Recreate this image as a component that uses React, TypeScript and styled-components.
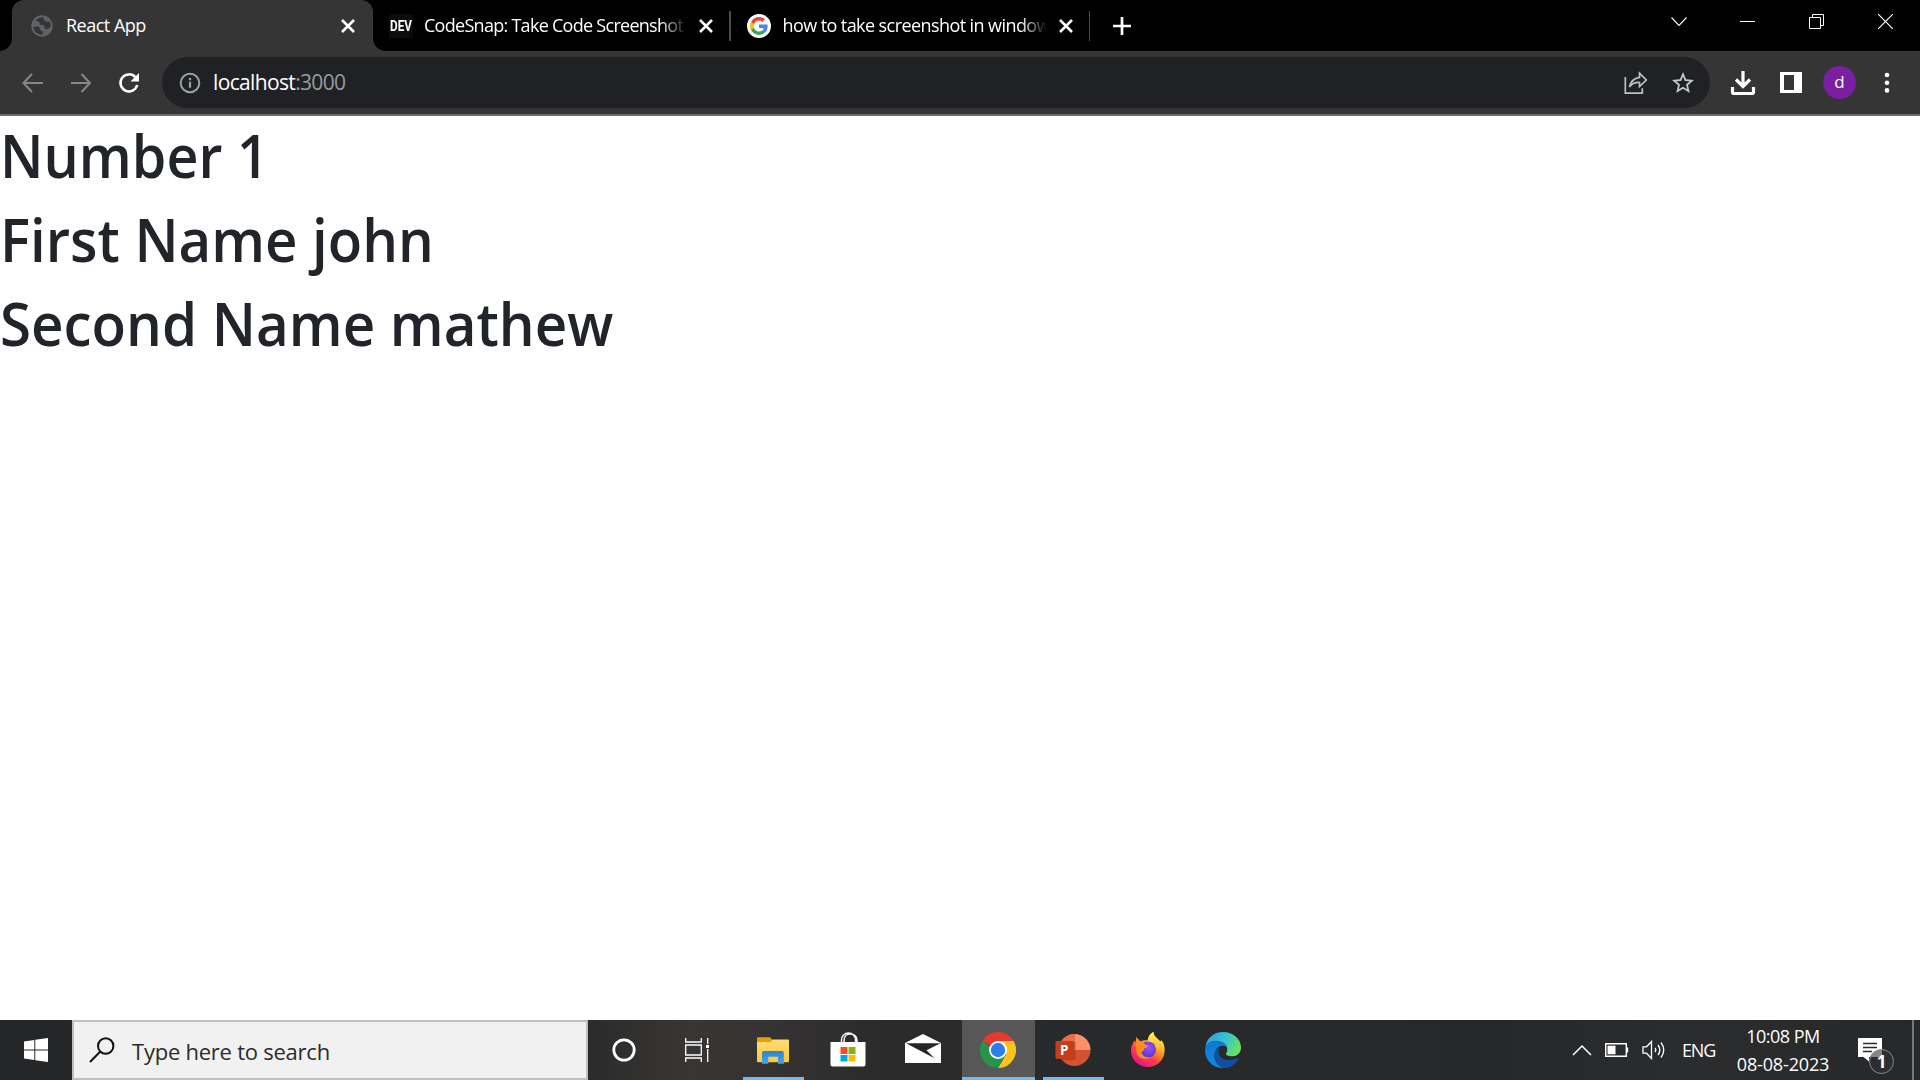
import React from "react";
import styled, { createGlobalStyle } from "styled-components";

const Global = createGlobalStyle`
  * { box-sizing: border-box; }
  body { margin: 0; overflow: hidden; background: #fff; font-family: "Open Sans", "Noto Sans", sans-serif; }
  svg { display: block; flex: none; }
`;

const Screen = styled.div`
  width: 1920px;
  height: 1080px;
  display: flex;
  flex-direction: column;
  background: #fff;
`;

const TabStrip = styled.header`
  height: 51px;
  display: flex;
  background: #000;
  padding-left: 12px;
`;

const Tab = styled.div<{ $active?: boolean; $width: number }>`
  position: relative;
  width: ${(p) => p.$width}px;
  height: 51px;
  flex: none;
  display: flex;
  align-items: center;
  padding: 0 ${(p) => (p.$active ? 17 : 15)}px 0 ${(p) => (p.$active ? 19 : 16)}px;
  background: ${(p) => (p.$active ? "#353535" : "transparent")};
  border-radius: 12px 12px 0 0;
  &::before,
  &::after {
    content: "";
    display: ${(p) => (p.$active ? "block" : "none")};
    position: absolute;
    bottom: 0;
    width: 12px;
    height: 12px;
  }
  &::before { left: -12px; background: radial-gradient(circle at 0 0, #000 11.5px, #353535 12px); }
  &::after { right: -12px; background: radial-gradient(circle at 100% 0, #000 11.5px, #353535 12px); }
`;

const TabTitle = styled.span<{ $fade?: boolean; $gap: number; $spacing: number }>`
  flex: 1;
  min-width: 0;
  margin: 0 ${(p) => (p.$fade ? 8 : 12)}px 2px ${(p) => p.$gap}px;
  height: 26px;
  line-height: 26px;
  overflow: hidden;
  white-space: nowrap;
  color: #fff;
  font-size: 18px;
  letter-spacing: ${(p) => p.$spacing}px;
  mask-image: ${(p) => (p.$fade ? "linear-gradient(90deg, #000 calc(100% - 30px), transparent calc(100% - 3px))" : "none")};
`;

const Divider = styled.div`
  width: 1.5px;
  height: 30px;
  margin-top: 11px;
  background: #4c4c4c;
  flex: none;
`;

const DevBadge = styled.div`
  width: 24px;
  height: 24px;
  flex: none;
  background: #0b0c0e;
  display: flex;
  align-items: center;
  justify-content: center;
  color: #fff;
  font: 700 14px/24px "Roboto", sans-serif;
  span { transform: scaleX(0.84); }
`;

const NewTab = styled.div`
  padding: 17px 0 0 23px;
`;

const WindowControls = styled.div`
  margin-left: auto;
  display: flex;
  height: 43px;
  align-items: center;
`;

const WindowButton = styled.div`
  width: 69px;
  display: flex;
  justify-content: center;
`;

const Toolbar = styled.div`
  height: 65px;
  display: flex;
  align-items: center;
  background: #353535;
  border-bottom: 2px solid #696969;
  padding-left: 21px;
`;

const NavButton = styled.div<{ $shift?: number }>`
  width: 48px;
  flex: none;
  padding-left: ${(p) => p.$shift ?? 0}px;
`;

const AddressBar = styled.div`
  width: 1548px;
  height: 51px;
  margin-left: -3px;
  border-radius: 26px;
  background: #202124;
  display: flex;
  align-items: center;
  padding: 0 15px 0 17px;
`;

const Url = styled.span`
  flex: 1;
  margin-left: 12px;
  color: #fff;
  font-size: 21px;
  line-height: 30px;
  letter-spacing: -0.65px;
  padding-bottom: 1px;
  span { color: #999b9e; }
`;

const AddressActions = styled.div`
  display: flex;
  gap: 23px;
`;

const ToolbarActions = styled.div`
  display: flex;
  align-items: center;
  margin-left: 20px;
`;

const Avatar = styled.div`
  width: 33px;
  height: 33px;
  border-radius: 50%;
  margin: 0 28px 0 21px;
  background: #7b1fa2;
  color: #fff;
  font-size: 17px;
  line-height: 32px;
  text-align: center;
`;

const Page = styled.main`
  flex: 1;
  background: #fff;
  padding-top: 3px;
`;

const Heading = styled.h1<{ $stretch: number }>`
  width: max-content;
  margin: 0 0 12px;
  font-size: 59.5px;
  line-height: 72px;
  font-weight: 560;
  color: #212529;
  white-space: nowrap;
  transform: scaleX(${(p) => p.$stretch});
  transform-origin: 0 0;
`;

const Taskbar = styled.footer`
  height: 60px;
  display: flex;
  background: linear-gradient(90deg, #242628 0, #2b2b2b 590px, #383634 690px, #363433 760px, #2b2b2b 880px, #27292a 1150px, #26282a 1500px, #2a2c2e 1700px, #262829 1920px);
`;

const StartButton = styled.div`
  width: 72px;
  display: flex;
  align-items: center;
  justify-content: center;
`;

const SearchBox = styled.div`
  width: 516px;
  height: 60px;
  border: 2px solid #bfbfbf;
  background: #f1f1f1;
  display: flex;
  align-items: center;
  padding-left: 15px;
`;

const SearchLabel = styled.span`
  margin: 1px 0 0 17px;
  color: #2b2b2b;
  font-size: 22px;
  line-height: 32px;
  letter-spacing: -0.24px;
`;

const TaskSlot = styled.div<{ $width?: number; $on?: boolean; $line?: number }>`
  position: relative;
  width: ${(p) => p.$width ?? 75}px;
  height: 60px;
  display: flex;
  align-items: center;
  justify-content: center;
  padding-right: ${(p) => (p.$width === 72 ? 0 : 2)}px;
  &::before {
    content: "";
    position: absolute;
    z-index: 0;
    inset: 0 1px;
    background: ${(p) => (p.$on ? "#575757" : "none")};
  }
  &::after {
    content: "";
    position: absolute;
    bottom: 0;
    left: calc(50% - ${(p) => (p.$line ?? 0) / 2}px);
    width: ${(p) => p.$line ?? 0}px;
    height: 3px;
    background: #76b9ed;
  }
  svg { position: relative; }
`;

const Tray = styled.div`
  margin-left: auto;
  display: flex;
  align-items: center;
`;

const TrayIcons = styled.div`
  display: flex;
  align-items: center;
  gap: 13px;
`;

const Language = styled.span`
  width: 33px;
  margin: 0 20px 0 16px;
  color: #fff;
  font-size: 18px;
  line-height: 26px;
  letter-spacing: -1.2px;
`;

const Clock = styled.div`
  width: 96px;
  display: flex;
  flex-direction: column;
  align-items: center;
  color: #fff;
  font-size: 18px;
  line-height: 28px;
  white-space: nowrap;
`;

const ClockLine = styled.span<{ $spacing: number }>`
  letter-spacing: ${(p) => p.$spacing}px;
`;

const Notifications = styled.div`
  position: relative;
  width: 38px;
  height: 60px;
  margin-left: 27px;
  padding-top: 18px;
`;

const Count = styled.div`
  position: absolute;
  left: 11px;
  top: 29px;
  width: 25px;
  height: 25px;
  border: 1px solid #8b8b8b;
  border-radius: 50%;
  background: linear-gradient(#868686, #868686) 0 0 / 12px 7px no-repeat #2b2d2e;
  color: #fff;
  text-align: center;
  font-size: 17px;
  font-weight: 700;
  line-height: 23px;
`;

const ShowDesktop = styled.div`
  width: 8px;
  height: 60px;
  margin-left: 16px;
  border-left: 2px solid #777;
`;

const Line = ({ w, h, d, sw = 2, color = "#fff" }: { w: number; h: number; d: string; sw?: number; color?: string }) => (
  <svg width={w} height={h} viewBox={`0 0 ${w} ${h}`} fill="none" stroke={color} strokeWidth={sw}>
    <path d={d} />
  </svg>
);

const CloseIcon = () => <Line w={16} h={16} sw={2.6} d="M2 2 14 14M14 2 2 14" />;

const Globe = () => (
  <svg width="22" height="22" viewBox="0 0 22 22">
    <circle cx="11" cy="11" r="10.700" fill="#5f6368" />
    <path d="M12.500 2.300C9.500 2 6.500 3.400 4.700 5.500 6 6.800 7 6.200 8 7c1.200 1 .2 2.600 1.800 3 1.700.3 2.400-.4 3.200.8.7 1.200-.2 2.700 1.200 3.200 1.800.5 4-.6 5.300-1.800.5-2-.1-4.200-1-5.700-1.600.9-2.600.3-3.800-.5-1.500-1-2.900-1.700-2.200-3.700Z" fill="#353535" />
    <path d="M2.300 11.800c2.200-.5 5-.6 6.200.4 1.100 1 .2 2.200 1 3 .9.900 2.200.5 2.400 1.800.1 1-.5 1.800-.9 2.700C6.500 19.700 2.800 16.300 2.300 11.800Z" fill="#353535" />
  </svg>
);

const GoogleIcon = () => (
  <svg width="24" height="24" viewBox="0 0 24 24">
    <circle cx="12" cy="12" r="12" fill="#fff" />
    <g transform="translate(3 3) scale(.375)">
      <path fill="#ea4335" d="M24 9.500c3.540 0 6.710 1.220 9.210 3.600l6.850-6.850C35.900 2.380 30.470 0 24 0 14.620 0 6.510 5.380 2.560 13.220l7.980 6.190C12.430 13.720 17.740 9.500 24 9.500z" />
      <path fill="#4285f4" d="M46.980 24.550c0-1.570-.15-3.090-.38-4.550H24v9.020h12.940c-.58 2.960-2.260 5.480-4.780 7.180l7.730 6c4.510-4.180 7.090-10.360 7.090-17.650z" />
      <path fill="#fbbc05" d="M10.530 28.590c-.48-1.450-.76-2.990-.76-4.590s.27-3.140.76-4.590l-7.980-6.190C.92 16.460 0 20.120 0 24c0 3.880.92 7.540 2.560 10.780l7.970-6.190z" />
      <path fill="#34a853" d="M24 48c6.480 0 11.930-2.130 15.890-5.810l-7.730-6c-2.150 1.450-4.920 2.300-8.160 2.300-6.260 0-11.570-4.220-13.470-9.910l-7.980 6.190C6.510 42.620 14.620 48 24 48z" />
    </g>
  </svg>
);

const ReloadIcon = () => (
  <svg width="22" height="22" viewBox="0 0 22 22">
    <path d="M17.300 5.200A8.500 8.500 0 1 0 19.200 13" fill="none" stroke="#fff" strokeWidth="2.500" />
    <path d="M21 1v8.500h-8.500z" fill="#fff" />
  </svg>
);

const InfoIcon = () => (
  <svg width="22" height="22" viewBox="0 0 22 22">
    <circle cx="11" cy="11" r="9.300" fill="none" stroke="#9aa0a6" strokeWidth="2" />
    <path d="M11 9.800v6M11 6v2.200" stroke="#9aa0a6" strokeWidth="2.200" />
  </svg>
);

const ShareIcon = () => (
  <svg width="24" height="24" viewBox="0 0 24 24" fill="none" stroke="#bdc0c4" strokeWidth="1.700">
    <path d="M1.300 6v16.200h17v-5" />
    <path d="M15.500 2.200 22.300 9l-6.800 6.500v-4C11 11.200 8 12.500 5.500 16 6.500 10.500 10 7.200 15.500 6.300z" />
  </svg>
);

const StarIcon = () => (
  <svg width="24" height="24" viewBox="0 0 24 24">
    <path transform="translate(-1.200 -1.200) scale(1.1)" fill="#c4c7cb" d="m22 9.240-7.190-.62L12 2 9.190 8.630 2 9.240l5.460 4.730L5.820 21 12 17.270 18.180 21l-1.630-7.030zM12 15.400l-3.760 2.270 1-4.280-3.320-2.880 4.380-.38L12 6.100l1.710 4.040 4.380.38-3.320 2.880 1 4.280z" />
  </svg>
);

const DownloadIcon = () => (
  <svg width="26" height="26" viewBox="0 0 26 26" fill="none" stroke="#fff" strokeWidth="3.200">
    <path d="M13 1v15M6 9.500l7 7 7-7" />
    <path d="M2.500 17v5q0 1.500 1.500 1.500h18q1.500 0 1.500-1.500v-5" />
  </svg>
);

const PanelSvg = styled.svg`
  margin-left: 24px;
`;

const SidePanelIcon = () => (
  <PanelSvg width="22" height="22" viewBox="0 0 22 22">
    <path d="M0 0h22v21H0zM4 3v15h10V3z" fill="#fff" fillRule="evenodd" />
  </PanelSvg>
);

const MenuDots = () => (
  <svg width="6" height="22" viewBox="0 0 6 22" fill="#fff">
    <circle cx="3" cy="3" r="2.300" />
    <circle cx="3" cy="10.700" r="2.300" />
    <circle cx="3" cy="18.400" r="2.300" />
  </svg>
);

const SearchIcon = () => (
  <svg width="26" height="26" viewBox="0 0 26 26" fill="none" stroke="#111" strokeWidth="2">
    <circle cx="16.700" cy="9" r="7.700" />
    <path d="M11.300 14.500 1 25" />
  </svg>
);

const WindowsLogo = () => (
  <svg width="24" height="24" viewBox="0 0 24 24" fill="#fff">
    <path d="M0 3.400 10.300 2v9.400H0zM11.300 1.800 24 0v11.400H11.300zM0 12.400h10.300V22L0 20.600zM11.300 12.400H24V24l-12.700-1.800z" />
  </svg>
);

const CortanaIcon = () => (
  <svg width="24" height="24" viewBox="0 0 24 24">
    <circle cx="12" cy="12" r="10.200" fill="none" stroke="#fff" strokeWidth="2.800" />
  </svg>
);

const TaskViewIcon = () => (
  <svg width="24" height="24" viewBox="0 0 24 24" fill="none" stroke="#fff" strokeWidth="1.300">
    <path d="M.7 0v4h15.600V0M.7 7h15.600v10H.7zM.7 24v-4h15.600v4M22.700 0v6M22.700 11v13" />
    <path d="M21 7h3v3h-3z" fill="#fff" stroke="none" />
  </svg>
);

const FolderIcon = () => (
  <svg width="32" height="27" viewBox="0 0 32 27">
    <defs>
      <linearGradient id="folder" x2="0" y2="1"><stop stopColor="#ffdc76" /><stop offset="1" stopColor="#fbc936" /></linearGradient>
      <linearGradient id="clip" x2="0" y2="1"><stop stopColor="#2d82cf" /><stop offset="1" stopColor="#45a4eb" /></linearGradient>
    </defs>
    <path d="M0 1.200Q0 .2 1 .2h12l2 2v4H0z" fill="#e2a006" />
    <path d="M0 5h13.500l2-2.500H31q1 0 1 1V24q0 1.200-1 1.200H1q-1 0-1-1.200z" fill="url(#folder)" />
    <path d="M5 26.800V16q0-2 2-2h18q1.800 0 1.800 2v10.800H21v-7H11.300v7z" fill="url(#clip)" />
  </svg>
);

const StoreIcon = () => (
  <svg width="36" height="36" viewBox="0 0 36 36">
    <path d="M11.500 10V8a7 7 0 0 1 14 0v2M14 10V8c0-8 13-8 13 0v2" fill="none" stroke="#f5f5f5" strokeWidth="1.500" />
    <path d="M.5 10h35v22.500q0 2-2 2h-31q-2 0-2-2z" fill="#fff" />
    <path d="M10.500 15h7v7h-7z" fill="#f25022" />
    <path d="M18.500 15h7v7h-7z" fill="#7fba00" />
    <path d="M10.500 23h7v6.500h-7z" fill="#00a4ef" />
    <path d="M18.500 23h7v6.500h-7z" fill="#ffb900" />
  </svg>
);

const MailIcon = () => (
  <svg width="36" height="32" viewBox="0 0 36 32" fill="#fff">
    <path d="M0 9 18 0l18 9v20H0z" />
    <path d="M1 9.200h34.500L21.500 16.200l8 8z" fill="#252728" />
  </svg>
);

const ChromeIcon = () => (
  <svg width="36" height="36" viewBox="0 0 36 36">
    <path d="M18 18 2.400 9A18 18 0 0 1 33.600 9z" fill="#e33b2e" />
    <path d="M18 9h15.600A18 18 0 0 1 18 36l8-13.500z" fill="#fcc31e" />
    <path d="M2.400 9A18 18 0 0 0 18 36l7.800-13.500H18z" fill="#269547" />
    <circle cx="18" cy="18" r="9" fill="#fff" />
    <circle cx="18" cy="18" r="7.200" fill="#2f7de9" />
  </svg>
);

const PowerPointIcon = () => (
  <svg width="36" height="32" viewBox="0 0 36 32">
    <path d="M19.500 16V0a16 16 0 1 0 16 16z" fill="#d35230" />
    <path d="M19.500 0v16h-16a16 16 0 0 1 16-16z" fill="#ed6c47" />
    <path d="M19.500 0a16 16 0 0 1 16 16h-16z" fill="#ff8f6b" />
    <path d="M18.500 8h2v18h-16z" fill="#8f2b15" opacity=".45" />
    <rect x=".5" y="7" width="18.500" height="18" rx="1.500" fill="#c43e1c" />
    <text x="5" y="20.500" fill="#fff" fontFamily="Open Sans" fontWeight="700" fontSize="13.500">P</text>
  </svg>
);

const FirefoxIcon = () => (
  <svg width="36" height="36" viewBox="0 0 36 36">
    <defs>
      <linearGradient id="fox" x1=".8" y1=".1" x2=".25" y2=".95">
        <stop stopColor="#fff044" /><stop offset=".35" stopColor="#ff9c22" /><stop offset=".65" stopColor="#ff4147" /><stop offset="1" stopColor="#e31587" />
      </linearGradient>
      <linearGradient id="flame" x2="0" y2="1"><stop stopColor="#fff44f" /><stop offset="1" stopColor="#ffa02e" /></linearGradient>
      <radialGradient id="orb" cx=".55" cy=".4"><stop stopColor="#a14fff" /><stop offset="1" stopColor="#5b3fd4" /></radialGradient>
    </defs>
    <path d="M2.500 12 4.200 8.500l1.500 2L6.300 5l4 4.200C13 8 16 8 17.500 8.500 18.200 4.500 20 1.500 23.500 0c0 4 3 5.500 5.200 8l2 1.500.6-1.500c3 3.500 3.800 8 3.200 12.500C33.300 29.500 26 35 18 35 8.500 35 1 28 1 18.500c0-2.500.6-4.500 1.500-6.500z" fill="url(#fox)" />
    <circle cx="18" cy="17.500" r="8" fill="url(#orb)" />
    <path d="M17.500 9.500C18.200 5 20 1.500 23.500 0c0 4 3 5.500 5.200 8 3 3.700 3.500 10 1 14-1-3-2.200-5-4-6.500 0-1.700-1.500-2.300-.4-3.300-1.300-1.700-5-2.500-7.800-2.700z" fill="url(#flame)" />
    <path d="M6.300 6.500l4 3c2-.3 4 1 5 3.300l3 .7c-.3 2-3 2.300-4 3.200-.7.800-.3 2.300-3 3.300 1 4.500 5 6 9 5-3 3-9 2.500-12-1S5 12 6.300 6.500z" fill="#ff8a1f" />
  </svg>
);

const EdgeIcon = () => (
  <svg width="36" height="36" viewBox="0 0 36 36">
    <defs>
      <linearGradient id="edgeTop" x1="0" y1=".2" x2="1" y2=".6"><stop stopColor="#2f9fe4" /><stop offset=".5" stopColor="#35c1d3" /><stop offset="1" stopColor="#6be35b" /></linearGradient>
      <linearGradient id="edgeSide" x2="0" y2="1"><stop stopColor="#1277cc" /><stop offset="1" stopColor="#0d8be4" /></linearGradient>
    </defs>
    <path d="M.5 15C1.500 6 9 0 18 0c10.500 0 18 7.300 18 15.500 0 5.500-4 8.800-9 8.800-4.500 0-6-1.600-6-2.600 0-.9 1.300-1.500 1.300-4.200C22.300 12 16 9 11 9 5.500 9 2 12 .5 15z" fill="url(#edgeTop)" />
    <path d="M0 18C0 12 5 8.800 11 8.800c5.500 0 11 3 11.300 7.200-1-1.500-2.800-2.200-4.800-2.200-4 0-8 4-8 10C9.500 30 14 35 19.500 36 8.500 37 0 28.500 0 18z" fill="url(#edgeSide)" />
    <path d="M15 15.500c-3 3.500-1.500 12.500 9 12.500 3.500 0 6-1 8-1.900 1-.5 1.800.4 1.200 1.300C30 32.500 25.500 36 19.500 36c-6-1-10-6-10-12 0-4 2.500-7.300 5.500-8.500z" fill="#114fa0" />
  </svg>
);

const ChevronUp = () => <Line w={20} h={12} sw={1.5} d="M1 11 10 2 19 11" />;

const BatteryIcon = () => (
  <svg width="24" height="14" viewBox="0 0 24 14">
    <path d="M.7.7h20.600v12.600H.7zM22.500 4.500v5" fill="none" stroke="#fff" strokeWidth="1.400" />
    <path d="M2.500 2.700h8v8.600h-8z" fill="#fff" />
  </svg>
);

const SpeakerIcon = () => (
  <svg width="24" height="20" viewBox="0 0 24 20" fill="none" stroke="#fff" strokeWidth="1.300">
    <path d="M1 6.800h3.500L9.500 1.500v17L4.500 13.200H1z" />
    <path d="M13 8q1.500 2 0 4M16 5q3.700 5 0 10M19 2.500q5.500 7.500 0 15" />
  </svg>
);

const MessageIcon = () => (
  <svg width="24" height="26" viewBox="0 0 24 26">
    <path d="M0 0h24v19H11v4.500L5.500 19H0z" fill="#fff" />
    <path d="M5 5.500h14M5 9.500h14M5 13.500h9" stroke="#292b2c" strokeWidth="1.400" />
  </svg>
);

const headings = [
  { text: "Number 1", stretch: 0.934 },
  { text: "First Name john", stretch: 0.947 },
  { text: "Second Name mathew", stretch: 0.949 },
];

export default function App() {
  return (
    <Screen>
      <Global />
      <TabStrip>
        <Tab $active $width={361}>
          <Globe />
          <TabTitle $gap={13} $spacing={-0.5}>React App</TabTitle>
          <CloseIcon />
        </Tab>
        <Tab $width={356}>
          <DevBadge><span>DEV</span></DevBadge>
          <TabTitle $fade $gap={11} $spacing={-0.72}>CodeSnap: Take Code Screenshot</TabTitle>
          <CloseIcon />
        </Tab>
        <Divider />
        <Tab $width={358}>
          <GoogleIcon />
          <TabTitle $fade $gap={12} $spacing={-0.58}>how to take screenshot in window</TabTitle>
          <CloseIcon />
        </Tab>
        <Divider />
        <NewTab><Line w={18} h={18} sw={2.7} d="M9 0V18M0 9H18" /></NewTab>
        <WindowControls>
          <WindowButton><Line w={16} h={10} sw={1.1} d="M.5.5 8 8.500 15.500.5" /></WindowButton>
          <WindowButton><Line w={15} h={1} sw={2} d="M0 .5H15" /></WindowButton>
          <WindowButton><Line w={15} h={15} sw={1} d="M.5 3.500H11.500V14.500H.5ZM3.500 3.500V.5H14.500V11.500H11.500" /></WindowButton>
          <WindowButton><Line w={15} h={15} sw={1.2} d="M0 0 15 15M15 0 0 15" /></WindowButton>
        </WindowControls>
      </TabStrip>
      <Toolbar>
        <NavButton><Line w={22} h={20} sw={2} color="#868686" d="M22 10H3M11 1 2.500 10 11 19" /></NavButton>
        <NavButton><Line w={22} h={20} sw={2} color="#868686" d="M2 10H21M12.500 1 21 10 12.500 19" /></NavButton>
        <NavButton $shift={1}><ReloadIcon /></NavButton>
        <AddressBar>
          <InfoIcon />
          <Url>localhost<span>:3000</span></Url>
          <AddressActions><ShareIcon /><StarIcon /></AddressActions>
        </AddressBar>
        <ToolbarActions>
          <DownloadIcon />
          <SidePanelIcon />
          <Avatar>d</Avatar>
          <MenuDots />
        </ToolbarActions>
      </Toolbar>
      <Page>
        {headings.map((h) => <Heading key={h.text} $stretch={h.stretch}>{h.text}</Heading>)}
      </Page>
      <Taskbar>
        <StartButton><WindowsLogo /></StartButton>
        <SearchBox>
          <SearchIcon />
          <SearchLabel>Type here to search</SearchLabel>
        </SearchBox>
        <TaskSlot $width={72}><CortanaIcon /></TaskSlot>
        <TaskSlot $width={76}><TaskViewIcon /></TaskSlot>
        <TaskSlot $line={61}><FolderIcon /></TaskSlot>
        <TaskSlot><StoreIcon /></TaskSlot>
        <TaskSlot><MailIcon /></TaskSlot>
        <TaskSlot $on $line={73}><ChromeIcon /></TaskSlot>
        <TaskSlot $line={61}><PowerPointIcon /></TaskSlot>
        <TaskSlot><FirefoxIcon /></TaskSlot>
        <TaskSlot><EdgeIcon /></TaskSlot>
        <Tray>
          <TrayIcons>
            <ChevronUp />
            <BatteryIcon />
            <SpeakerIcon />
          </TrayIcons>
          <Language>ENG</Language>
          <Clock>
            <ClockLine $spacing={-0.5}>10:08 PM</ClockLine>
            <ClockLine $spacing={-0.15}>08-08-2023</ClockLine>
          </Clock>
          <Notifications>
            <MessageIcon />
            <Count>1</Count>
          </Notifications>
          <ShowDesktop />
        </Tray>
      </Taskbar>
    </Screen>
  );
}
